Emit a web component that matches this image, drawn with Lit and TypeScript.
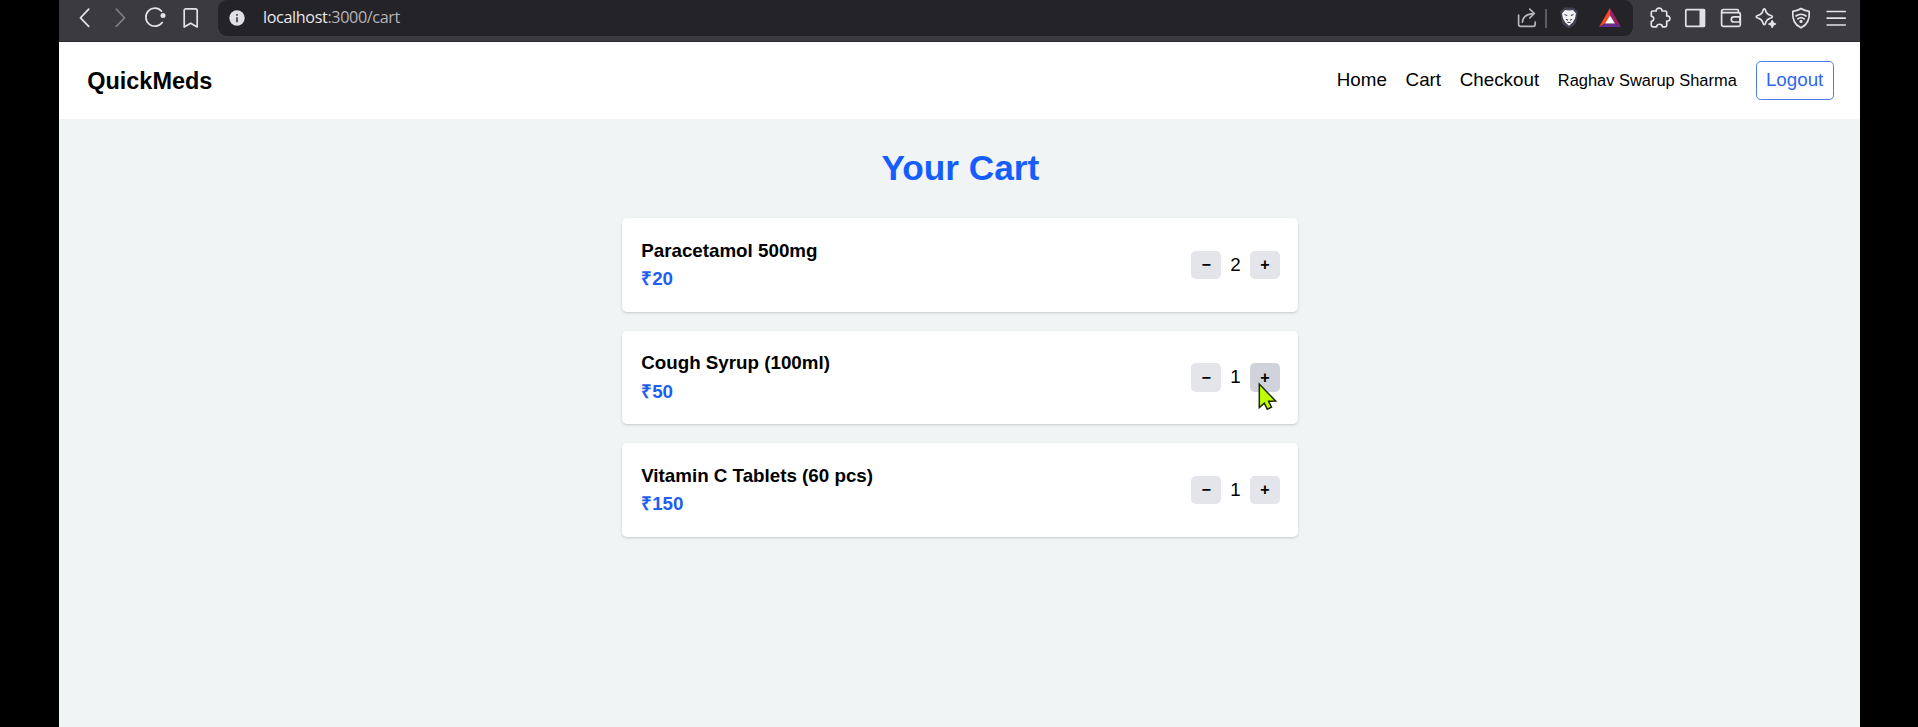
import { LitElement, html, css, svg } from "lit";
import { customElement, property } from "lit/decorators.js";

interface CartItem {
  name: string;
  price: number;
  qty: number;
  hovered?: boolean;
}

const items: CartItem[] = [
  { name: "Paracetamol 500mg", price: 20, qty: 2 },
  { name: "Cough Syrup (100ml)", price: 50, qty: 1, hovered: true },
  { name: "Vitamin C Tablets (60 pcs)", price: 150, qty: 1 },
];

const glyphs = {
  back: svg`<path d="M15.7 3.2 7.5 11.8l8.2 8.600"/>`,
  forward: svg`<path d="m8.3 3.200 8.2 8.600-8.2 8.600"/>`,
  reload: svg`<path d="M17.600 5.200A9 9 0 1 0 18.200 16.400"/><circle cx="19" cy="9.600" r="2.500" fill="currentColor" stroke="none"/>`,
  bookmark: svg`<path d="M5.200 4.500c0-1.100.6-1.700 1.700-1.700h9.600c1.100 0 1.700.6 1.700 1.700v16.500l-6.500-3.800-6.500 3.800z"/>`,
  share: svg`<path d="M3.600 9v9.300c0 1.300.8 2 2 2h12.600c1.200 0 2-.7 2-2v-2.200"/><path d="M7.400 16.200c.3-5 3.600-8.200 11.400-8.600M14.800 3.200l4.600 4.300-4.600 4.300"/>`,
  puzzle: svg`<path d="M3.300 6.500c0-1 .5-1.500 1.500-1.500h3.400c-.6-3.800 6.400-3.800 5.800 0h3.200c1 0 1.500.5 1.500 1.500v3.400c4.300-.6 4.300 5.600 0 5.200v4.200c0 1-.5 1.500-1.500 1.500h-2.800c0-3.400-5.800-3.400-5.800 0H4.800c-1 0-1.500-.5-1.500-1.500v-4c3.200.2 3.200-5.200 0-5z"/>`,
  sidebar: svg`<rect x="2.800" y="3.600" width="18.600" height="16.800" rx=".8"/><path d="M16.500 3h5.600v18h-5.600z" fill="currentColor" stroke="none"/>`,
  wallet: svg`<path d="M20.400 6.600V4.700c0-.8-.5-1.200-1.200-1.200H5.800C4.400 3.500 3.600 4.200 3.600 5.100s.8 1.600 2.200 1.600h15c1 0 1.500.5 1.500 1.400v10.600c0 1-.6 1.600-1.600 1.600H5.400c-1.100 0-1.800-.7-1.800-1.800V5.300"/><path d="M22 10.800H15.800c-3.300 0-3.300 5.200 0 5.200H22z"/>`,
  sparkle: svg`<path d="M11.300 2.900c.8 0 1 .6 1.200 1.300.8 3.200 1.800 4.400 5.400 5.300 1.900.6 1.900 1.900 0 2.500-3.600.9-4.600 2.100-5.400 5.300-.4 1.800-2 1.800-2.400 0-.8-3.200-1.800-4.400-5.400-5.300-1.900-.6-1.900-1.900 0-2.500 3.600-.9 4.600-2.100 5.400-5.300.2-.7.400-1.300 1.200-1.300z"/><path d="M19.200 14.800c.3 2.300.9 2.900 3.200 3.200-2.300.3-2.900.9-3.200 3.200-.3-2.300-.9-2.900-3.200-3.200 2.300-.3 2.900-.9 3.200-3.200z" fill="currentColor"/>`,
  vpn: svg`<path d="M12 2.500c2.600 1.900 5.200 2.600 8.200 2.800.7 8-1.600 13.600-8.200 16.500C5.400 18.900 3.100 13.300 3.800 5.300 6.800 5.100 9.400 4.400 12 2.500z"/><path d="M7 10c2.900-2.300 7.100-2.300 10 0M8.800 12.900c1.900-1.600 4.500-1.600 6.400 0"/><circle cx="12" cy="15.400" r="1.600" fill="currentColor" stroke="none"/>`,
  menu: svg`<path d="M3.200 5.500h18M3.200 12.200h18M3.200 19h18"/>`,
};

@customElement("tool-icon")
class ToolIcon extends LitElement {
  @property() name: keyof typeof glyphs = "back";

  static styles = css`
    :host { display: block; width: 24px; height: 24px; flex: none; }
    .glyph { display: block; fill: none; stroke: currentColor; stroke-width: 1.700; stroke-linecap: round; stroke-linejoin: round; }
  `;

  render() {
    return html`<svg class="glyph" width="24" height="24" viewBox="0 0 24 24">${glyphs[this.name]}</svg>`;
  }
}

@customElement("browser-bar")
class BrowserBar extends LitElement {
  static styles = css`
    :host {
      display: flex; height: 42px; box-sizing: border-box; align-items: flex-start;
      background: #3b3a3e; border-bottom: 1px solid #2b2a2e; color: #e3e2e6;
      padding: 0 12px 0 14px; overflow: hidden;
    }
    .group { display: flex; align-items: center; height: 36px; }
    .left { gap: 11.300px; width: 145px; }
    .dim { color: #7c7b80; }
    .address {
      flex: 1; display: flex; align-items: center; height: 36px; box-sizing: border-box;
      background: #242328; border-radius: 9px; padding: 0 11.500px 0 11px;
    }
    .info { display: block; }
    .url { margin-left: 18px; flex: 1; padding-bottom: 2px; font: 16.200px "Open Sans", "Noto Sans", sans-serif; letter-spacing: -0.380px; color: #b5b4b9; }
    .host { color: #e8e7eb; }
    .share { color: #b5b4b9; }
    .rule { width: 2px; height: 19px; background: #5c5b60; margin: 0 12px 0 6px; }
    .lion { margin-right: 20px; }
    .right { gap: 11.300px; margin-left: 15px; }
  `;

  render() {
    return html`
      <div class="group left">
        <tool-icon name="back"></tool-icon>
        <tool-icon class="dim" name="forward"></tool-icon>
        <tool-icon name="reload"></tool-icon>
        <tool-icon name="bookmark"></tool-icon>
      </div>
      <div class="address">
        <svg class="info" width="16" height="16" viewBox="0 0 16 16">
          <circle cx="8" cy="8" r="7.700" fill="#e0dfe4" />
          <path d="M8 3.900v1.800M8 7.200v5" stroke="#4d4c52" stroke-width="1.800" />
        </svg>
        <div class="url"><span class="host">localhost</span>:3000/cart</div>
        <tool-icon class="share" name="share"></tool-icon>
        <div class="rule"></div>
        <svg class="lion" width="20" height="24" viewBox="0 0 20 24">
          <path d="M5.500 1.500h9l2 2 2.500 1.500-.8 4.500-1 6.500c-.4 2.500-4 4.600-7.200 6.500-3.200-1.900-6.800-4-7.200-6.500l-1-6.500L1 5l2.500-1.500z" fill="#414354" />
          <path d="M6 4l4 .6 4-.6 3 3.400-1 5-2.300 4.200-3.700 3.200-3.700-3.200L4 12.400l-1-5z" fill="#f2f2f5" />
          <path d="m5.500 8.500 2.700 1M14.500 8.500l-2.700 1M7 13.300l2 1M13 13.300l-2 1M8.400 16.500h3.200" fill="none" stroke="#414354" stroke-width="1.100" />
        </svg>
        <svg width="22" height="20" viewBox="0 0 22 20">
          <path d="M11 0v8L6 15.500 0 19z" fill="#ff4724" />
          <path d="M11 0v8l5 7.500 6 3.500z" fill="#9e1f63" />
          <path d="M0 19l6-3.500h10l6 3.500z" fill="#662d91" />
          <path d="M11 7.500l5 8H6z" fill="#fff" />
        </svg>
      </div>
      <div class="group right">
        <tool-icon name="puzzle"></tool-icon>
        <tool-icon name="sidebar"></tool-icon>
        <tool-icon name="wallet"></tool-icon>
        <tool-icon name="sparkle"></tool-icon>
        <tool-icon name="vpn"></tool-icon>
        <tool-icon name="menu"></tool-icon>
      </div>
    `;
  }
}

@customElement("cart-row")
class CartRow extends LitElement {
  @property({ attribute: false }) item!: CartItem;

  static styles = css`
    :host {
      display: flex; align-items: center; justify-content: space-between;
      box-sizing: border-box; height: 93.900px; padding: 0 18.600px 0 18.800px;
      background: #fff; border-radius: 4.700px;
      box-shadow: 0 1px 3px rgba(0, 0, 0, .1), 0 1px 2px rgba(0, 0, 0, .08);
    }
    .name, .price { font-size: 18.780px; line-height: 28.170px; font-weight: 700; }
    .price { color: #1f5fee; }
    .stepper { display: flex; align-items: center; gap: 9.390px; font-size: 18.780px; line-height: 28.170px; }
    .btn {
      display: grid; place-items: center; color: inherit; border: 0; background: #e4e5eb; border-radius: 4.700px;
      width: 29.700px; height: 28.170px; padding: 0;
      font: 700 16px "Liberation Sans", Arial, sans-serif;
    }
    .slot { position: relative; display: flex; }
    .hovered { background: #d0d3dc; }
    .pointer { position: absolute; left: 7.500px; top: 18.500px; }
  `;

  render() {
    const { name, price, qty, hovered } = this.item;
    return html`
      <div>
        <div class="name">${name}</div>
        <div class="price">₹${price}</div>
      </div>
      <div class="stepper">
        <button class="btn">−</button>
        <span>${qty}</span>
        <div class="slot">
          <button class="btn ${hovered ? "hovered" : ""}">+</button>
          ${hovered
            ? html`<svg class="pointer" width="20" height="30" viewBox="0 0 20 30">
                <path d="M1.300 2v23.500l5-4.300 3 6 4.200-2-2.900-5.900 7-.3z" fill="#bfff00" stroke="#1c2400" stroke-width="1.500" />
              </svg>`
            : ""}
        </div>
      </div>
    `;
  }
}

@customElement("app-root")
class AppRoot extends LitElement {
  static styles = css`
    :host {
      display: block; box-sizing: border-box; height: 727px; padding: 0 58px 0 59px; overflow: hidden;
      background: #000; color: #000; font-family: "Liberation Sans", Arial, sans-serif;
    }
    .page { height: 685px; background: #f0f4f5; }
    .nav {
      display: flex; align-items: center; justify-content: space-between;
      height: 77px; box-sizing: border-box; padding: 0 26.300px 0 28.200px; background: #fff;
    }
    .brand { font-size: 23.470px; font-weight: 700; padding-top: 1px; }
    .links { display: flex; align-items: center; gap: 18.780px; font-size: 18.780px; line-height: 28.170px; }
    .user { font-size: 16.430px; }
    .logout {
      font: inherit; color: #2f68ee; background: none; border: 1px solid #4a7cec;
      border-radius: 4.700px; padding: 0 9.390px; height: 39.500px;
    }
    .main { width: 676px; margin: 0 auto; padding: 28.200px 0 0 1.800px; }
    .title { margin: 0 0 28.500px; text-align: center; color: #155dfc; font-size: 35.210px; line-height: 42.250px; font-weight: 700; }
    .list { display: grid; gap: 18.780px; }
  `;

  render() {
    return html`
      <browser-bar></browser-bar>
      <div class="page">
        <nav class="nav">
          <div class="brand">QuickMeds</div>
          <div class="links">
            <span>Home</span><span>Cart</span><span>Checkout</span>
            <span class="user">Raghav Swarup Sharma</span>
            <button class="logout">Logout</button>
          </div>
        </nav>
        <main class="main">
          <h1 class="title">Your Cart</h1>
          <div class="list">${items.map((item) => html`<cart-row .item=${item}></cart-row>`)}</div>
        </main>
      </div>
    `;
  }
}
